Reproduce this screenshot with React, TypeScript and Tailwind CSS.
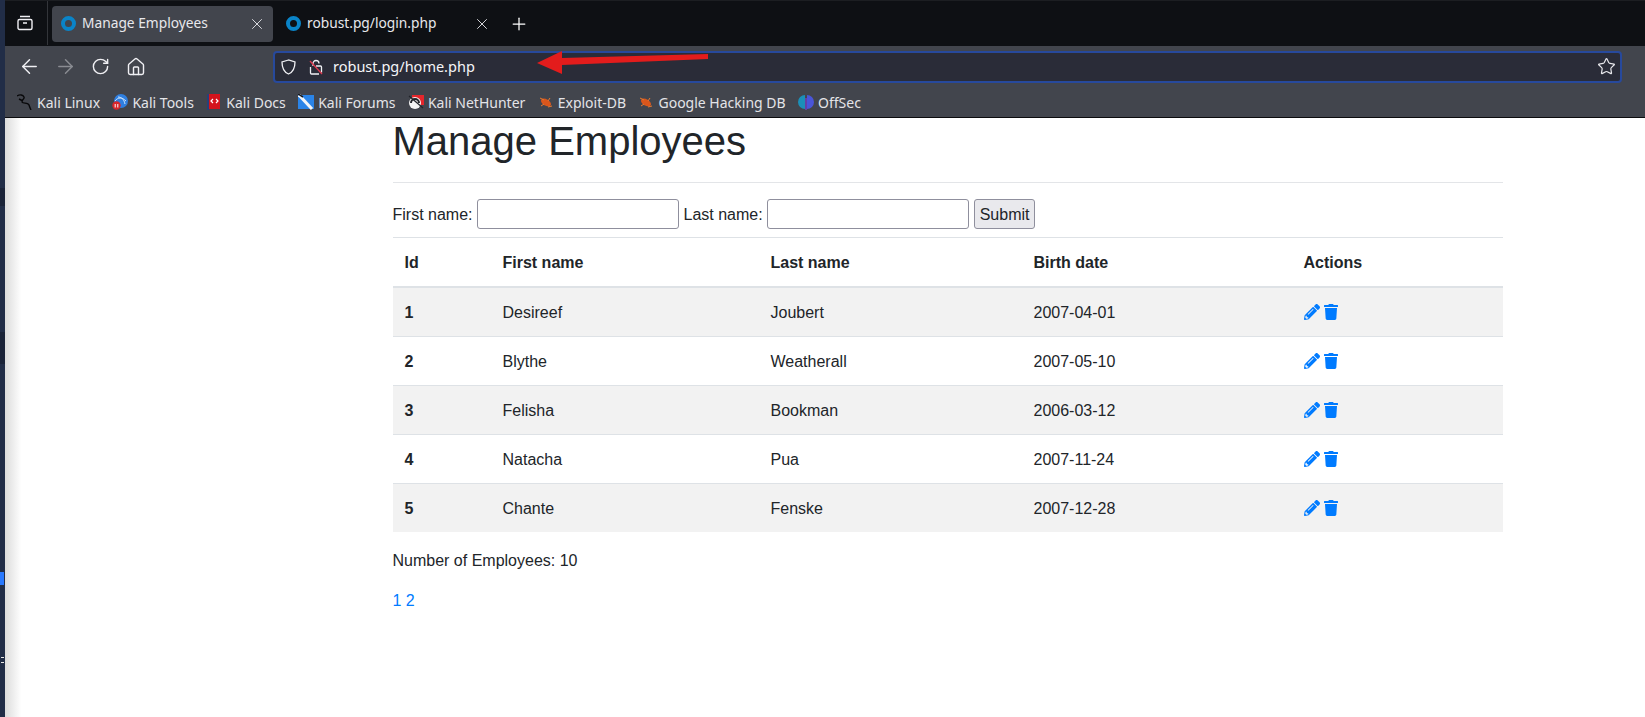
import React from "react";
import { ArrowLeft, ArrowRight, Home, Plus, RotateCw, Star, X } from "lucide-react";
import { FaPencilAlt, FaTrash } from "react-icons/fa";

const employees = [
  { id: 1, first: "Desireef", last: "Joubert", birth: "2007-04-01" },
  { id: 2, first: "Blythe", last: "Weatherall", birth: "2007-05-10" },
  { id: 3, first: "Felisha", last: "Bookman", birth: "2006-03-12" },
  { id: 4, first: "Natacha", last: "Pua", birth: "2007-11-24" },
  { id: 5, first: "Chante", last: "Fenske", birth: "2007-12-28" },
];

const TabDot = () => (
  <span className="h-[15px] w-[15px] shrink-0 rounded-full border-[4px] border-[#0a84c8]" />
);

const DragonIcon = () => (
  <svg width="16" height="16" viewBox="0 0 16 16" fill="none" stroke="#08080a" strokeWidth="1.4">
    <path d="M0 2c3-2 6-1 7 1s-3 3-2 5 6 0 7 3 1 3 2 5M2 5l4 2" />
  </svg>
);

const ToolsIcon = () => (
  <svg width="16" height="16" viewBox="0 0 16 16">
    <circle cx="9" cy="7" r="7" fill="#2f7fe0" />
    <path d="M3 7c3-4 7-4 11 0M6 3c3 0 6 2 7 7" fill="none" stroke="#cfe4fa" strokeWidth="1" />
    <circle cx="4.5" cy="11.5" r="4.2" fill="#d9262b" />
    <path d="M3.2 10v3.5M5.8 10v3.5" stroke="#fff" strokeWidth="1" />
  </svg>
);

const DocsIcon = () => (
  <svg width="16" height="16" viewBox="0 0 16 16">
    <rect x="2" y="0" width="12" height="15" fill="#d4141c" />
    <rect x="1" y="0" width="2" height="16" fill="#27407a" />
    <path d="M7 5l-2 2 2 2M10 5l2 2-2 2" fill="none" stroke="#fff" strokeWidth="1.2" />
  </svg>
);

const ForumsIcon = () => (
  <svg width="16" height="16" viewBox="0 0 16 16">
    <rect x="0" y="1" width="16" height="14" fill="#2a84e8" />
    <path d="M1 1l13 14" stroke="#f2f5f8" strokeWidth="3" />
    <path d="M0 0l5 3" stroke="#15171c" strokeWidth="1.5" />
  </svg>
);

const HunterIcon = () => (
  <svg width="16" height="16" viewBox="0 0 16 16">
    <rect x="4" y="1" width="12" height="10" fill="#e5262c" />
    <circle cx="7" cy="9" r="6" fill="#f4f4f4" />
    <path d="M3 9a4 4 0 0 1 8 0" fill="none" stroke="#23252b" strokeWidth="2" />
    <path d="M1 2l14 12" stroke="#23252b" strokeWidth="1.2" />
  </svg>
);

const BugIcon = () => (
  <svg width="16" height="16" viewBox="0 0 16 16">
    <ellipse cx="8" cy="8.5" rx="5.5" ry="3.2" transform="rotate(30 8 8.5)" fill="#d9561c" />
    <path d="M2 4l4 2M10 13l4-1M3 12l3-2M12 4l-2 3" stroke="#e8792f" strokeWidth="1" />
  </svg>
);

const OffSecIcon = () => (
  <svg width="16" height="16" viewBox="0 0 16 16">
    <path d="M7 1a7 7 0 0 0 0 14z" fill="#1b8fb8" />
    <path d="M9 1a7 7 0 0 1 0 14z" fill="#4a55d8" />
    <rect x="7.4" y="4" width="1.2" height="12" fill="#7a3de0" />
  </svg>
);

const bookmarks = [
  { label: "Kali Linux", icon: <DragonIcon /> },
  { label: "Kali Tools", icon: <ToolsIcon /> },
  { label: "Kali Docs", icon: <DocsIcon /> },
  { label: "Kali Forums", icon: <ForumsIcon /> },
  { label: "Kali NetHunter", icon: <HunterIcon /> },
  { label: "Exploit-DB", icon: <BugIcon /> },
  { label: "Google Hacking DB", icon: <BugIcon /> },
  { label: "OffSec", icon: <OffSecIcon /> },
];

const BrowserChrome = () => (
  <div className="font-['Noto_Sans',sans-serif] text-[#e8e8ec]">
    {/* Tab strip */}
    <div className="flex h-[46px] items-center border-t border-[#1c1e22] bg-[#0e1014]">
      <div className="flex h-[44px] w-[43px] items-center justify-center self-start border-r border-[#33353a] pr-[2px]">
        <svg width="16" height="16" viewBox="0 0 16 16" fill="none" stroke="#f0f0f4" strokeWidth="1.4">
          <rect x="1" y="4.5" width="14" height="10" rx="1.5" />
          <path d="M3 1.5h10M6 8h4" />
        </svg>
      </div>
      <div className="ml-[4px] flex h-[36px] w-[221px] items-center rounded-[4px] bg-[#42454d] pl-[9px] pr-[7px]">
        <TabDot />
        <span className="ml-[6px] flex-1 text-[13.75px]">Manage Employees</span>
        <X size={18} strokeWidth={1.2} />
      </div>
      <div className="flex h-[36px] w-[221px] items-center pl-[13px] pr-[3px]">
        <TabDot />
        <span className="ml-[6px] flex-1 text-[13.75px]">robust.pg/login.php</span>
        <X size={18} strokeWidth={1.2} />
      </div>
      <Plus size={20} strokeWidth={1.5} className="ml-[15px] text-white" />
    </div>

    {/* Navigation row */}
    <div className="flex h-[41px] items-center bg-[#42454d] pr-[23px]">
      <div className="flex w-[268px] items-center pl-[13px]">
        <ArrowLeft size={23} strokeWidth={1.5} className="text-[#f0f0f4]" />
        <ArrowRight size={23} strokeWidth={1.5} className="ml-[13px] text-[#8a8c92]" />
        <RotateCw size={19} strokeWidth={1.8} className="ml-[14px] text-[#f0f0f4]" />
        <Home size={20} strokeWidth={1.7} className="ml-[16px] text-[#f0f0f4]" />
      </div>
      <div className="flex h-[32px] flex-1 items-center rounded-[4px] border-2 border-[#27499c] bg-[#2a2c38] pl-[6px] pr-[4px]">
        <svg width="15" height="16" viewBox="0 0 15 16" fill="none" stroke="#f0f0f4" strokeWidth="1.3">
          <path d="M7.5 1L1 3c0 6 1.5 10 6.5 12 5-2 6.5-6 6.5-12z" />
        </svg>
        <svg width="16" height="16" viewBox="0 0 16 16" fill="none" className="ml-[12px]">
          <path d="M5 7V4.5a3 3 0 0 1 6 0" stroke="#f0f0f4" strokeWidth="1.3" />
          <path d="M8 7h4.5a1 1 0 0 1 1 1v5.5M11 15H3.5a1 1 0 0 1-1-1V8" stroke="#f0f0f4" strokeWidth="1.3" />
          <path d="M2 2l12 13" stroke="#e0384e" strokeWidth="1.3" />
        </svg>
        <span className="ml-[9px] flex-1 text-[14.5px] text-[#f5f5f8]">robust.pg/home.php</span>
        <Star size={19} strokeWidth={1.5} className="text-[#e8e8ec]" />
      </div>
    </div>

    {/* Bookmarks row */}
    <div className="flex h-[31px] items-center gap-[12.4px] border-b border-[#0c0c0e] bg-[#42454d] pl-[12px]">
      {bookmarks.map((bookmark) => (
        <div key={bookmark.label} className="flex items-center gap-[4px] text-[14px] text-[#e4e4e8]">
          {bookmark.icon}
          <span>{bookmark.label}</span>
        </div>
      ))}
    </div>
  </div>
);

const EmployeeTable = () => (
  <table className="w-full table-fixed border-collapse text-[16px] leading-6 text-[#212529]">
    <thead>
      <tr className="text-left font-bold">
        <th className="w-[98px] border-t border-b-2 border-[#dee2e6] px-3 pb-[11px] pt-[13px]">Id</th>
        <th className="w-[268px] border-t border-b-2 border-[#dee2e6] px-3 pb-[11px] pt-[13px]">First name</th>
        <th className="w-[263px] border-t border-b-2 border-[#dee2e6] px-3 pb-[11px] pt-[13px]">Last name</th>
        <th className="w-[270px] border-t border-b-2 border-[#dee2e6] px-3 pb-[11px] pt-[13px]">Birth date</th>
        <th className="border-t border-b-2 border-[#dee2e6] px-3 pb-[11px] pt-[13px]">Actions</th>
      </tr>
    </thead>
    <tbody>
      {employees.map((employee) => (
        <tr key={employee.id} className="odd:bg-[#f2f2f2]">
          <td className="border-t border-[#dee2e6] px-3 pb-[11px] pt-[13px] font-bold">{employee.id}</td>
          <td className="border-t border-[#dee2e6] px-3 pb-[11px] pt-[13px]">{employee.first}</td>
          <td className="border-t border-[#dee2e6] px-3 pb-[11px] pt-[13px]">{employee.last}</td>
          <td className="border-t border-[#dee2e6] px-3 pb-[11px] pt-[13px]">{employee.birth}</td>
          <td className="border-t border-[#dee2e6] px-3 py-3">
            <div className="flex h-6 items-center gap-[3px] text-[#007bff]">
              <FaPencilAlt size={16} />
              <FaTrash size={16} />
            </div>
          </td>
        </tr>
      ))}
    </tbody>
  </table>
);

const App = () => (
  <div className="relative flex h-[717px] w-[1645px] overflow-hidden bg-white font-['Liberation_Sans',sans-serif]">
    {/* Sliver of the desktop behind the window */}
    <div className="relative w-[5px] shrink-0 bg-[#212d47]">
      <div className="absolute left-0 top-[188px] h-[18px] w-full bg-[#1a2338]" />
      <div className="absolute left-0 top-[332px] h-[32px] w-full bg-[#1a2338]" />
      <div className="absolute left-0 top-[572px] h-[13px] w-[4px] bg-[#2979ff]" />
      <div className="absolute left-[1px] top-[657px] h-[6px] w-[3px] border-y border-[#e8e8e8]" />
    </div>

    <div className="flex min-w-0 flex-1 flex-col">
      <BrowserChrome />
      <div className="flex flex-1 bg-gradient-to-r from-[#dcdcdc] via-white via-[1%] to-white">
        <div className="ml-[387.5px] w-[1110px]">
          <h1 className="text-[40px] leading-[47px] text-[#212529]">Manage Employees</h1>
          <hr className="mt-[17px] border-[#e3e5e8]" />
          <form className="mt-[16px] flex h-[30px] items-center text-[16px] text-[#212529]">
            <label className="pt-[2px]">First name:</label>
            <input className="ml-[4px] h-[30px] w-[202px] rounded-[3px] border border-[#8f8f9d] bg-white" />
            <label className="ml-[5px] pt-[2px]">Last name:</label>
            <input className="ml-[4px] h-[30px] w-[202px] rounded-[3px] border border-[#8f8f9d] bg-white" />
            <button type="button" className="ml-[5px] h-[30px] rounded-[3px] border border-[#8f8f9d] bg-[#e9e9ed] px-[5px] pt-[2px]">
              Submit
            </button>
          </form>
          <div className="mt-[8px]">
            <EmployeeTable />
          </div>
          <p className="mt-[17px] text-[16px] leading-[24px] text-[#212529]">Number of Employees: 10</p>
          <p className="mt-[16px] text-[16px] leading-[24px] text-[#007bff]">1 2</p>
        </div>
      </div>
    </div>

    {/* Red annotation arrow */}
    <svg className="absolute left-[530px] top-[46px]" width="185" height="34" viewBox="0 0 185 34">
      <path d="M7 17L32 5v7l146-4v5L32 19v9z" fill="#e31c1c" />
    </svg>
  </div>
);

export default App;
